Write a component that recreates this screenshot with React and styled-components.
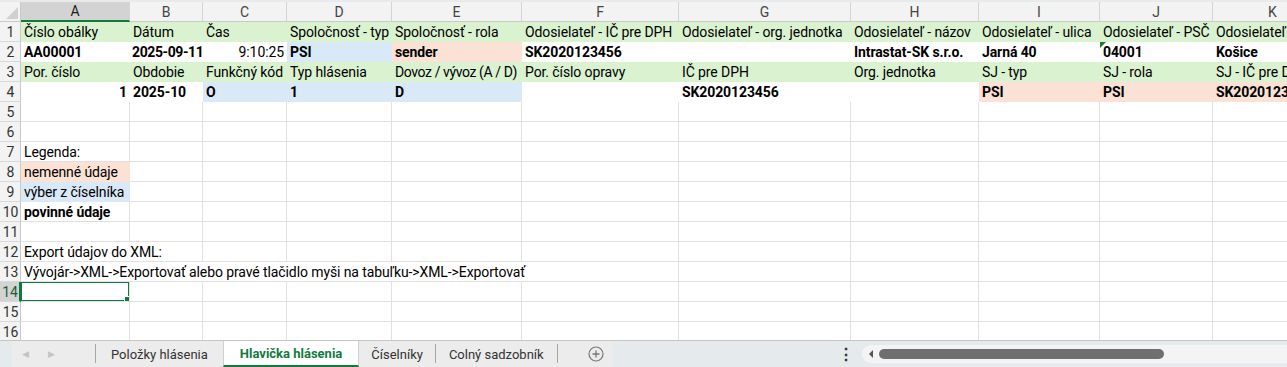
import React from 'react'
import styled, { createGlobalStyle, css } from 'styled-components'

const GlobalStyle = createGlobalStyle`
  html, body { margin: 0; padding: 0; background: #fff; }
  body { font-family: Roboto, "Liberation Sans", sans-serif; overflow: hidden; }
  * { box-sizing: border-box; }
`

const FILLS = { g: '#daf2d0', p: '#fbe2d5', bl: '#dae9f8', w: '#ffffff' }
const GREEN = '#137a3d'
const GRID = '#e1e1e1'

const COLS = ['A', 'B', 'C', 'D', 'E', 'F', 'G', 'H', 'I', 'J', 'K']
const WIDTHS = [109, 73, 84, 105, 130, 157, 172, 128, 121, 113, 120]

const Window = styled.div`
  width: 1287px;
  height: 367px;
  display: flex;
  flex-direction: column;
  overflow: hidden;
`

const TopStrip = styled.div`
  height: 2px;
  background: #e7ebee;
`

const Sheet = styled.div`
  flex: 1;
  overflow: hidden;
  display: grid;
  grid-template-columns: 21px ${WIDTHS.map((w) => w + 'px').join(' ')};
  grid-template-rows: 20px;
  grid-auto-rows: 20px;
  align-content: start;
`

const Corner = styled.div`
  background: #f3f3f3;
  border-right: 1px solid #c9c9c9;
  border-bottom: 1px solid #c9c9c9;
  position: relative;
  &::after {
    content: '';
    position: absolute;
    right: 2px;
    bottom: 2px;
    border-left: 12px solid transparent;
    border-bottom: 12px solid #d0d0d0;
  }
`

const ColHead = styled.div`
  background: ${(p) => (p.$active ? '#d3d3d3' : '#f3f3f3')};
  border-right: 1px solid #d4d4d4;
  border-bottom: ${(p) => (p.$active ? `2px solid ${GREEN}` : '1px solid #c9c9c9')};
  color: ${(p) => (p.$active ? '#1d1d1d' : '#444')};
  font-size: 14px;
  display: flex;
  align-items: center;
  justify-content: center;
`

const RowHead = styled.div`
  background: ${(p) => (p.$active ? '#d3d3d3' : '#f3f3f3')};
  border-right: ${(p) => (p.$active ? `2px solid ${GREEN}` : '1px solid #c9c9c9')};
  border-bottom: 1px solid #d8d8d8;
  color: ${(p) => (p.$active ? '#1e5c36' : '#333')};
  font-size: 14px;
  display: flex;
  align-items: center;
  justify-content: center;
  padding-left: 1px;
`

const Cell = styled.div`
  position: relative;
  grid-column: span ${(p) => p.$span || 1};
  background: ${(p) => (p.$fill ? FILLS[p.$fill] : '#fff')};
  border-right: 1px solid ${(p) => (p.$fill ? FILLS[p.$fill] : GRID)};
  border-bottom: 1px solid ${(p) => (p.$fill ? FILLS[p.$fill] : GRID)};
  font-size: 14px;
  letter-spacing: ${(p) => (p.$tight ? '-0.4px' : '-0.1px')};
  font-weight: ${(p) => (p.$bold ? 700 : 400)};
  color: #000;
  padding: 0 ${(p) => (p.$right ? '2px' : '3px')};
  line-height: 20px;
  white-space: nowrap;
  overflow: hidden;
  text-align: ${(p) => (p.$right ? 'right' : 'left')};
  ${(p) =>
    p.$tri &&
    css`
      &::before {
        content: '';
        position: absolute;
        left: 0;
        top: 0;
        border-top: 6px solid #1e7b34;
        border-right: 6px solid transparent;
      }
    `}
`

const Selection = styled.div`
  position: absolute;
  left: -1px;
  top: -1px;
  right: -1px;
  bottom: -1px;
  border: 2px solid ${GREEN};
  pointer-events: none;
  &::after {
    content: '';
    position: absolute;
    right: -4px;
    bottom: -4px;
    width: 6px;
    height: 6px;
    background: ${GREEN};
    border: 1px solid #fff;
  }
`

const TabBar = styled.div`
  height: 27px;
  border-top: 1px solid #c6c6c6;
  background: #e5eaed;
  display: flex;
  align-items: stretch;
  font-size: 13px;
  color: #333;
`

const TabStrip = styled.div`
  margin-left: 12px;
  width: 601px;
  flex-shrink: 0;
  background: #ececec;
  display: flex;
  align-items: stretch;
  & > * { flex-shrink: 0; }
`

const Arrows = styled.div`
  width: 84px;
  display: flex;
  align-items: center;
  gap: 19px;
  padding-left: 10px;
  color: #c4c4c4;
  font-size: 9px;
  border-right: 1px solid #a6a6a6;
  margin: 3px 0 4px;
`

const Tab = styled.div`
  display: flex;
  align-items: center;
  padding: 0 ${(p) => p.$pad || 15}px;
  white-space: nowrap;
  ${(p) =>
    p.$active
      ? css`
          background: #fff;
          color: ${GREEN};
          font-weight: 700;
          border-bottom: 2px solid ${GREEN};
          border-left: 1px solid #d0d0d0;
          border-right: 1px solid #d0d0d0;
        `
      : css`
          color: #333;
        `}
`

const TabSep = styled.div`
  width: 1px;
  background: #a6a6a6;
  margin: 3px 0 4px;
`

const AddTab = styled.div`
  flex: 1;
  display: flex;
  align-items: center;
  justify-content: center;
  padding-left: 22px;
`

const Dots = styled.div`
  width: 249px;
  flex-shrink: 0;
  display: flex;
  align-items: center;
  justify-content: flex-end;
  padding-right: 8px;
  color: #333;
  font-size: 16px;
  font-weight: 700;
`

const Track = styled.div`
  flex: 1;
  margin: 4px 0 4px;
  background: #f4f4f4;
  border-radius: 9px 0 0 9px;
  display: flex;
  align-items: center;
  padding-left: 7px;
  gap: 6px;
`

const TrackArrow = styled.div`
  width: 0;
  height: 0;
  border-top: 4px solid transparent;
  border-bottom: 4px solid transparent;
  border-right: 4px solid #555;
`

const Thumb = styled.div`
  width: 285px;
  height: 10px;
  border-radius: 5px;
  background: #6f6f6f;
`

const g = (v, extra = {}) => ({ v, f: 'g', ...extra })
const B = (v, f = 'w', extra = {}) => ({ v, b: true, f, ...extra })

const ROWS = [
  [
    g('Číslo obálky'), g('Dátum'), g('Čas'), g('Spoločnosť - typ'), g('Spoločnosť - rola'),
    g('Odosielateľ - IČ pre DPH'), g('Odosielateľ - org. jednotka'), g('Odosielateľ - názov'),
    g('Odosielateľ - ulica'), g('Odosielateľ - PSČ'), g('Odosielateľ - mesto'),
  ],
  [
    B('AA00001'), B('2025-09-11', 'w', { r: true, t: true }), { v: '9:10:25', f: 'w', r: true },
    B('PSI', 'bl'), B('sender', 'p'), B('SK2020123456'), { v: '', f: 'w' },
    B('Intrastat-SK s.r.o.'), B('Jarná 40'), B('04001', 'w', { tri: true }), B('Košice'),
  ],
  [
    g('Por. číslo'), g('Obdobie'), g('Funkčný kód'), g('Typ hlásenia'),
    g('Dovoz / vývoz (A / D)', { t: true }),
    g('Por. číslo opravy'), g('IČ pre DPH'), g('Org. jednotka'), g('SJ - typ'), g('SJ - rola'),
    g('SJ - IČ pre DPH'),
  ],
  [
    B('1', 'w', { r: true }), B('2025-10'), B('O', 'bl'), B('1', 'bl'), B('D', 'bl'),
    { v: '', f: 'w' }, B('SK2020123456'), { v: '', f: 'w' }, B('PSI', 'p'), B('PSI', 'p'),
    B('SK2020123456', 'p'),
  ],
  [],
  [],
  [{ v: 'Legenda:' }],
  [{ v: 'nemenné údaje', f: 'p' }],
  [{ v: 'výber z číselníka', f: 'bl' }],
  [{ v: 'povinné údaje', b: true }],
  [],
  [{ v: 'Export údajov do XML:', span: 2 }],
  [{ v: 'Vývojár->XML->Exportovať alebo pravé tlačidlo myši na tabuľku->XML->Exportovať', span: 6 }],
  [{ v: '', sel: true }],
  [],
  [],
]

function Row({ index, cells }) {
  const out = []
  let col = 0
  while (col < COLS.length) {
    const c = cells[col] || {}
    const span = c.span || 1
    out.push(
      <Cell
        key={col}
        $span={span}
        $fill={c.f}
        $bold={c.b}
        $right={c.r}
        $tri={c.tri}
        $tight={c.t}
      >
        {c.v}
        {c.sel && <Selection />}
      </Cell>
    )
    col += span
  }
  return (
    <>
      <RowHead $active={index === 14}>{index}</RowHead>
      {out}
    </>
  )
}

export default function App() {
  return (
    <Window>
      <GlobalStyle />
      <TopStrip />
      <Sheet>
        <Corner />
        {COLS.map((c) => (
          <ColHead key={c} $active={c === 'A'}>
            {c}
          </ColHead>
        ))}
        {ROWS.map((cells, i) => (
          <Row key={i} index={i + 1} cells={cells} />
        ))}
      </Sheet>
      <TabBar>
        <TabStrip>
          <Arrows>
            <span>◀</span>
            <span>▶</span>
          </Arrows>
          <Tab>Položky hlásenia</Tab>
          <Tab $active $pad={16}>Hlavička hlásenia</Tab>
          <Tab $pad={12}>Číselníky</Tab>
          <TabSep />
          <Tab $pad={13}>Colný sadzobník</Tab>
          <TabSep />
          <AddTab>
            <svg width="16" height="16" viewBox="0 0 16 16">
              <circle cx="8" cy="8" r="7" fill="none" stroke="#777" strokeWidth="1.2" />
              <path d="M8 4.5v7M4.5 8h7" stroke="#777" strokeWidth="1.3" />
            </svg>
          </AddTab>
        </TabStrip>
        <Dots>⋮</Dots>
        <Track>
          <TrackArrow />
          <Thumb />
        </Track>
      </TabBar>
    </Window>
  )
}
